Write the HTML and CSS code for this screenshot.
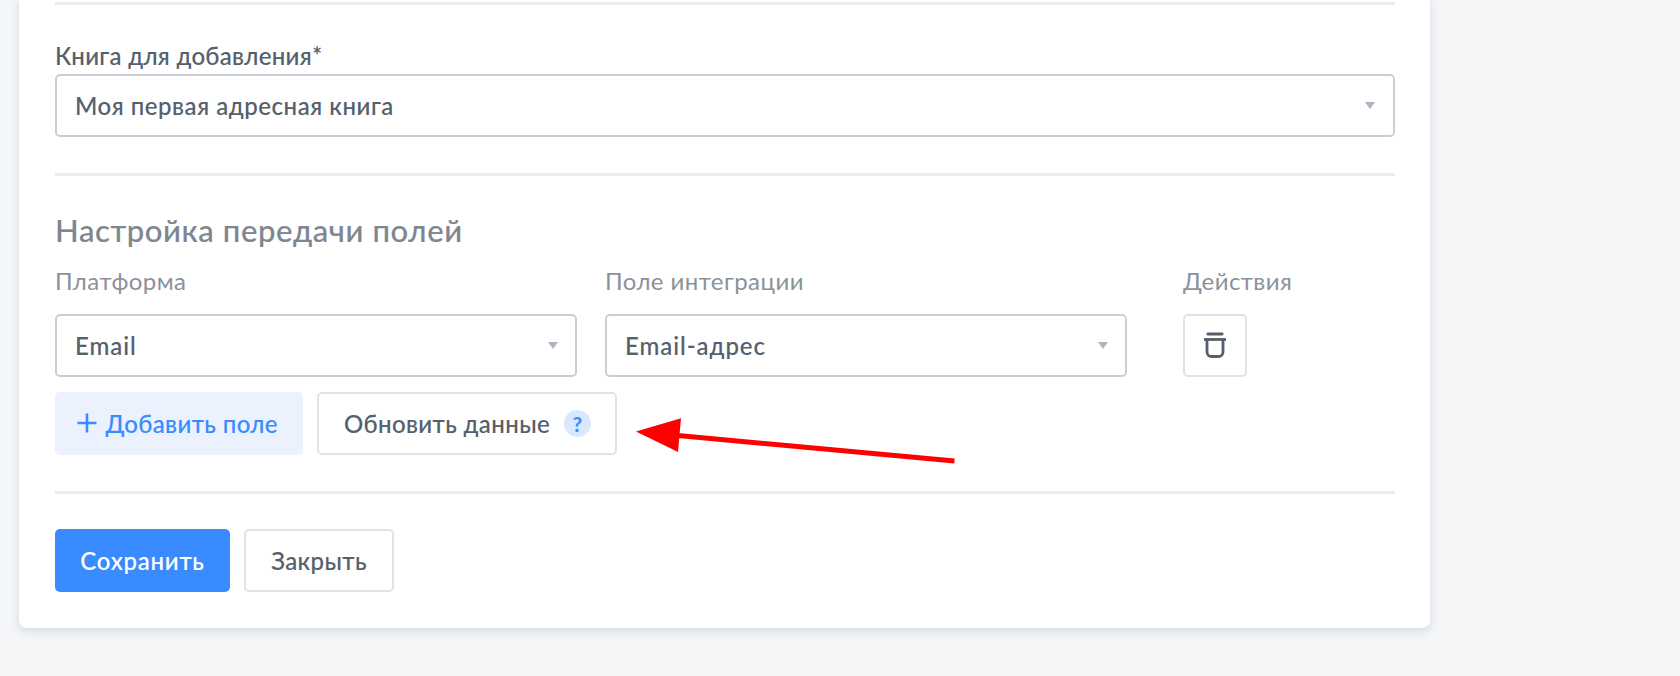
FILE: index.html
```html
<!DOCTYPE html>
<html lang="ru">
<head>
  <meta charset="UTF-8" />
  <meta name="viewport" content="width=device-width, initial-scale=1.0"/>
  <title>Настройка интеграции</title>
  <link rel="stylesheet" href="styles.css">
</head>
<body>
<div class="card">
  <hr class="divider" />

  <div class="book">
    <div class="label">Книга для добавления*</div>
    <div class="select">Моя первая адресная книга</div>
  </div>

  <hr class="divider" />

  <h2>Настройка передачи полей</h2>

  <div class="fields">
    <div class="field">
      <div class="caption">Платформа</div>
      <div class="select email">Email</div>
    </div>
    <div class="field">
      <div class="caption">Поле интеграции</div>
      <div class="select email">Email-адрес</div>
    </div>
    <div class="field actions">
      <div class="caption">Действия</div>
      <button class="btn btn-icon" aria-label="Удалить">
        <svg width="24" height="26" viewBox="0 0 24 26" fill="none" stroke="#555f6d" stroke-linecap="round">
          <path d="M4.8 2h14.4" stroke-width="2.8"/>
          <path d="M1 7.5h22" stroke-width="2.8" stroke-linecap="butt"/>
          <path d="M4 8v12a4.5 4.5 0 0 0 4.5 4.5h7a4.5 4.5 0 0 0 4.5-4.5V8" stroke-width="2.8"/>
        </svg>
      </button>
    </div>
  </div>

  <div class="buttons">
    <button class="btn btn-add">
      <svg width="20" height="20" viewBox="0 0 20 20" stroke="#398bff" stroke-width="2.6"><path d="M10 .5v19M.5 10h19"/></svg>
      <span>Добавить поле</span>
    </button>
    <div class="refresh">
      <button class="btn btn-refresh">
        <span>Обновить данные</span>
        <span class="help">?</span>
      </button>
      <svg class="arrow" width="322" height="46" viewBox="0 0 322 46">
        <path d="M42 17.5 318.5 43" stroke="#f00" stroke-width="5"/>
        <path d="M0 13.5 45 .3 42 34z" fill="#f00"/>
      </svg>
    </div>
  </div>

  <hr class="divider" />

  <div class="buttons footer">
    <button class="btn btn-save">Сохранить</button>
    <button class="btn btn-close">Закрыть</button>
  </div>
</div>
</body>
</html>
```

FILE: styles.css
```css
* {
  box-sizing: border-box;
}

body {
  margin: 0;
  height: 676px;
  overflow: hidden;
  background: #f4f6f8;
  color: #555f6d;
  font-family: Lato, 'Open Sans', sans-serif;
  font-size: 24px;
  font-weight: 500;
  -webkit-text-stroke: 0.12px;
}

.card {
  width: 1411px;
  height: 627.5px;
  margin-left: 19px;
  padding: 2px 35.5px 0 36px;
  background: #fff;
  border-radius: 0 0 8px 8px;
  box-shadow: 0 3px 10px rgba(85, 105, 125, 0.2);
}

.divider {
  height: 3px;
  margin: 0;
  border: none;
  background: #ededee;
}

.label {
  padding-top: 36px;
  height: 69px;
  line-height: 30px;
  letter-spacing: 0.3px;
}

.book {
  height: 168px;
}

.select {
  position: relative;
  height: 63px;
  padding-left: 18px;
  border: 2px solid #c9ced8;
  border-radius: 5px;
  line-height: 60px;
  letter-spacing: 0.55px;
  white-space: nowrap;
}

.email {
  letter-spacing: 0.95px;
}

.select::after {
  content: "";
  position: absolute;
  right: 17.5px;
  top: 26px;
  border: 5.5px solid transparent;
  border-top: 7px solid #adb4c2;
  border-bottom: none;
}

h2 {
  margin: 0;
  padding-top: 34px;
  height: 88px;
  color: #7e8690;
  font-size: 31px;
  font-weight: 500;
  line-height: 40px;
  letter-spacing: 0.6px;
}

.fields {
  display: grid;
  grid-template-columns: 522px 522px 64px;
  column-gap: 28px;
}

.actions {
  margin-left: 28px;
  width: 64px;
}

.caption {
  height: 50px;
  padding-top: 2px;
  color: #8b929b;
  font-weight: 400;
  line-height: 30px;
  letter-spacing: 0.43px;
  white-space: nowrap;
  -webkit-text-stroke: 0;
}

.btn {
  display: flex;
  align-items: center;
  justify-content: center;
  height: 63px;
  padding: 0;
  border: 2px solid #dfe3e8;
  border-radius: 5px;
  background: #fff;
  color: #555f6d;
  font: inherit;
  letter-spacing: 0.4px;
  white-space: nowrap;
}

.btn-icon {
  width: 64px;
  padding-bottom: 1px;
}

.buttons {
  display: flex;
  gap: 14px;
  margin-top: 14.5px;
  height: 99px;
}

.btn-add {
  width: 248px;
  justify-content: flex-start;
  padding-left: 21.5px;
  gap: 9px;
  border: none;
  background: #ebf2fe;
  color: #398bff;
}

.refresh {
  position: relative;
}

.btn-refresh {
  width: 300px;
  gap: 14px;
  padding-left: 1px;
}

.help {
  width: 27px;
  height: 27px;
  border-radius: 50%;
  background: #dae8ff;
  color: #398bff;
  font-size: 21px;
  font-weight: 700;
  line-height: 27px;
  text-align: center;
}

.arrow {
  position: absolute;
  left: 319px;
  top: 26px;
}

.footer {
  margin-top: 35px;
}

.btn-save {
  width: 175px;
  border: none;
  background: #398bff;
  color: #fff;
  letter-spacing: 0.75px;
}

.btn-close {
  width: 150px;
}
```
